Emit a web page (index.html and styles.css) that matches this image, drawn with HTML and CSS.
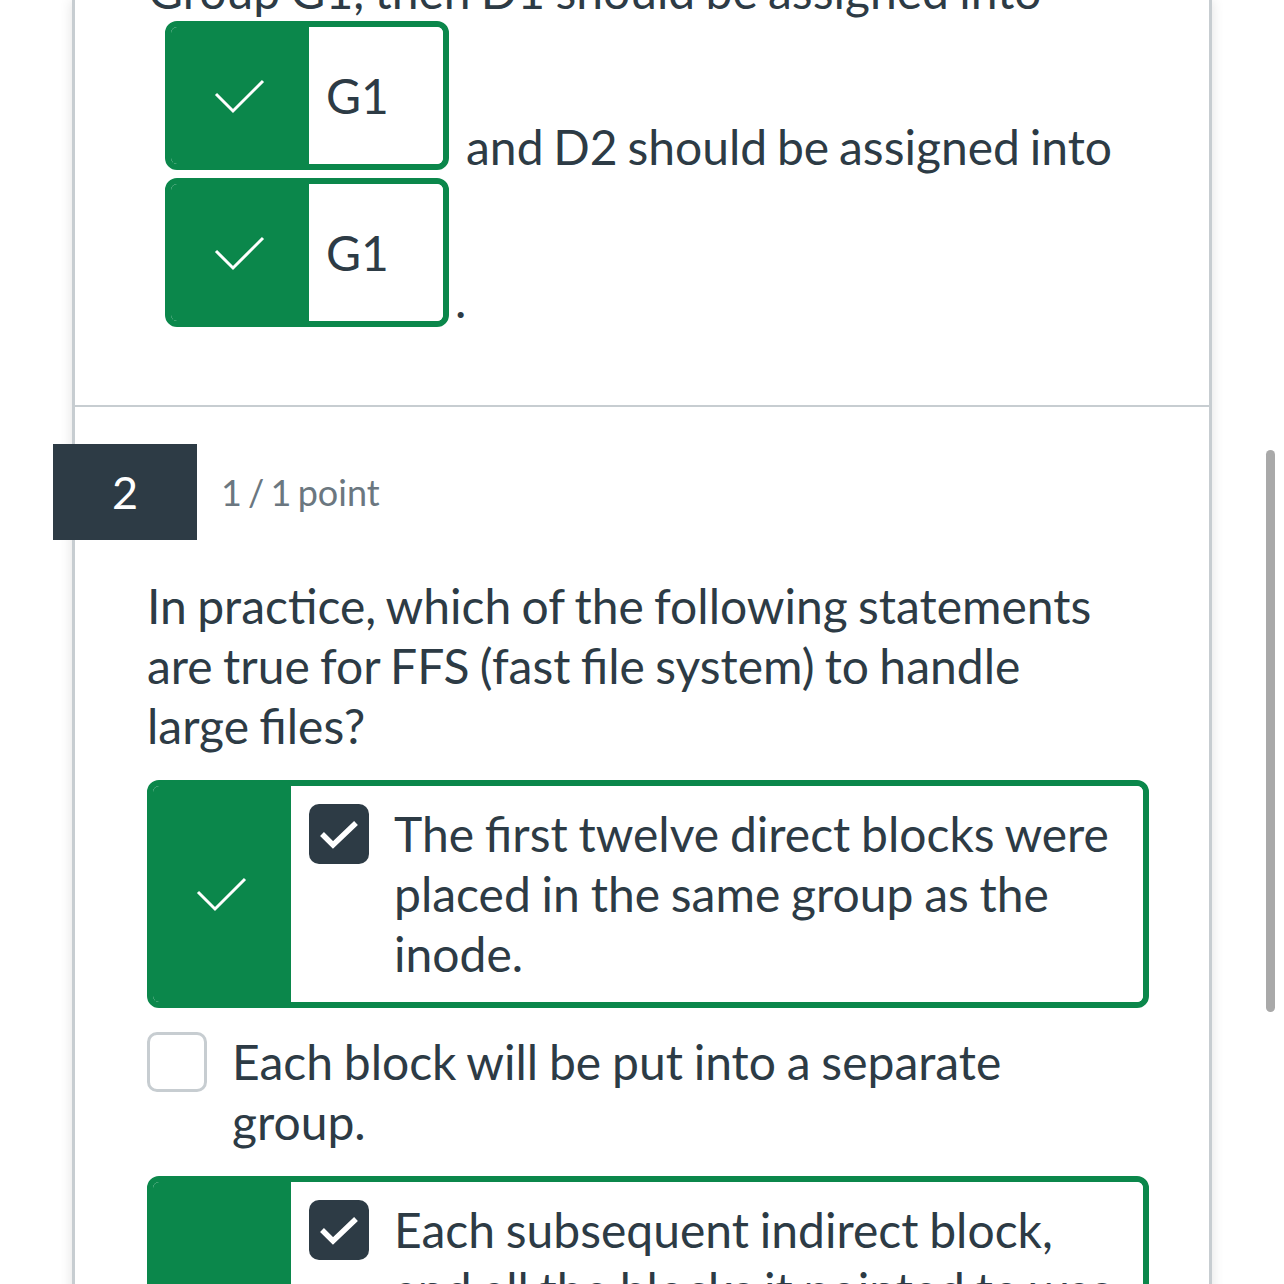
FILE: index.html
```html
<!DOCTYPE html>
<html lang="en">
<head>
<meta charset="utf-8">
<title>Quiz results</title>
<link rel="stylesheet" href="styles.css">
</head>
<body>
<div class="page">
  <div class="card">
    <section class="prev">
      <p class="line">Group G1, then D1 should be assigned into</p>
      <div class="blank-row">
        <span class="blank">
          <span class="blank-mark">
            <svg class="thin-check" width="52" height="36" viewBox="0 0 52 36"><polyline points="2,16 19,33 49,3" fill="none" stroke="#fff" stroke-width="3"/></svg>
          </span>
          <span class="blank-val">G1</span>
        </span>
        <span class="after after-and">and D2 should be assigned into</span>
      </div>
      <div class="blank-row second">
        <span class="blank">
          <span class="blank-mark">
            <svg class="thin-check" width="52" height="36" viewBox="0 0 52 36"><polyline points="2,16 19,33 49,3" fill="none" stroke="#fff" stroke-width="3"/></svg>
          </span>
          <span class="blank-val">G1</span>
        </span>
        <span class="after after-dot">.</span>
      </div>
    </section>

    <section class="q">
      <header class="q-head">
        <div class="q-num">2</div>
        <div class="q-pts">1 / 1 point</div>
      </header>
      <p class="q-text">In practice, which of the following statements are true for FFS (fast file system) to handle large files?</p>
      <div class="answers">
        <div class="answer correct">
          <div class="ans-mark">
            <svg width="52" height="36" viewBox="0 0 52 36"><polyline points="2,16 19,33 49,3" fill="none" stroke="#fff" stroke-width="3"/></svg>
          </div>
          <div class="ans-body">
            <span class="cb checked"><svg width="60" height="60" viewBox="0 0 60 60"><polyline points="13,30 24,41 47,19" fill="none" stroke="#fff" stroke-width="5.5"/></svg></span>
            <span class="ans-text">The first twelve direct blocks were placed in the same group as the inode.</span>
          </div>
        </div>
        <div class="answer plain">
          <span class="cb empty"></span>
          <span class="ans-text">Each block will be put into a separate group.</span>
        </div>
        <div class="answer correct">
          <div class="ans-mark">
            <svg width="52" height="36" viewBox="0 0 52 36"><polyline points="2,16 19,33 49,3" fill="none" stroke="#fff" stroke-width="3"/></svg>
          </div>
          <div class="ans-body">
            <span class="cb checked"><svg width="60" height="60" viewBox="0 0 60 60"><polyline points="13,30 24,41 47,19" fill="none" stroke="#fff" stroke-width="5.5"/></svg></span>
            <span class="ans-text">Each subsequent indirect block, and all the blocks it pointed to was placed in a different group from the one holding the inode.</span>
          </div>
        </div>
      </div>
    </section>
  </div>
  <div class="scrollbar"></div>
</div>
</body>
</html>
```

FILE: styles.css
```css
* { box-sizing: border-box; }

body {
  margin: 0;
  background: #fff;
  font-family: Lato, "Liberation Sans", sans-serif;
  color: #2d3b45;
}

.page {
  position: relative;
  width: 1284px;
  height: 1284px;
  overflow: hidden;
}

.card {
  display: flow-root;
  margin-left: 72px;
  width: 1140px;
  min-height: 1284px;
  background: #fff;
  border-left: 3px solid #c7cdd1;
  border-right: 3px solid #c7cdd1;
  box-shadow: 0 0 12px rgba(0, 0, 0, 0.12);
}

/* previous question tail */
.prev {
  margin-top: -39px;
  padding: 0 60px 75px 73px;
  border-bottom: 2px solid #c7cdd1;
}

.line {
  margin: 0;
  font-size: 48px;
  line-height: 60px;
  word-spacing: -2px;
}

.blank-row {
  display: flex;
  align-items: flex-start;
}

.blank-row.second { margin-top: 1px; }

.blank {
  display: flex;
  margin-left: 17px;
  width: 284px;
  height: 149px;
  border: 6px solid #0b874b;
  border-radius: 12px;
  overflow: hidden;
  flex: none;
}

.blank-mark {
  width: 138px;
  background: #0b874b;
  display: flex;
  align-items: center;
  justify-content: center;
}

.blank-val {
  flex: 1;
  display: flex;
  align-items: center;
  padding-left: 17px;
  background: #fff;
  font-size: 48px;
  line-height: 1;
}

.after {
  font-size: 48px;
  line-height: 60px;
  word-spacing: -2.5px;
}

.after-and { margin-top: 96px; margin-left: 17px; }
.after-dot { margin-top: 92px; margin-left: 6px; }

/* question 2 */
.q {
  padding: 37px 60px 0 72px;
}

.q-head {
  display: flex;
  align-items: center;
  margin-left: -94px;
}

.q-num {
  width: 144px;
  height: 96px;
  background: #2d3b45;
  color: #fff;
  font-size: 45px;
  display: flex;
  align-items: center;
  justify-content: center;
}

.q-pts {
  margin-left: 24px;
  font-size: 36px;
  color: #6b7780;
  word-spacing: -3px;
}

.q-text {
  margin: 36px 0 24px;
  padding-right: 24px;
  font-size: 48px;
  line-height: 60px;
  word-spacing: -2px;
}

.answers {
  display: flex;
  flex-direction: column;
  gap: 24px;
}

.answer.correct {
  display: flex;
  border: 6px solid #0b874b;
  border-radius: 12px;
  overflow: hidden;
}

.ans-mark {
  flex: none;
  width: 138px;
  background: #0b874b;
  display: flex;
  align-items: center;
  justify-content: center;
}

.ans-body {
  flex: 1;
  display: flex;
  align-items: flex-start;
  gap: 25px;
  padding: 18px;
  background: #fff;
}

.answer.plain {
  display: flex;
  align-items: flex-start;
  gap: 25px;
  padding-right: 24px;
}

.cb {
  flex: none;
  width: 60px;
  height: 60px;
  border-radius: 10px;
}

.cb.checked { background: #2d3b45; }
.cb.checked svg { display: block; }

.cb.empty {
  border: 3px solid #c7cdd1;
  background: #fff;
}

.ans-text {
  font-size: 48px;
  line-height: 60px;
  word-spacing: -1.5px;
}

.scrollbar {
  position: absolute;
  left: 1266px;
  top: 450px;
  width: 9px;
  height: 562px;
  border-radius: 5px;
  background: #a9a9a9;
}
```
